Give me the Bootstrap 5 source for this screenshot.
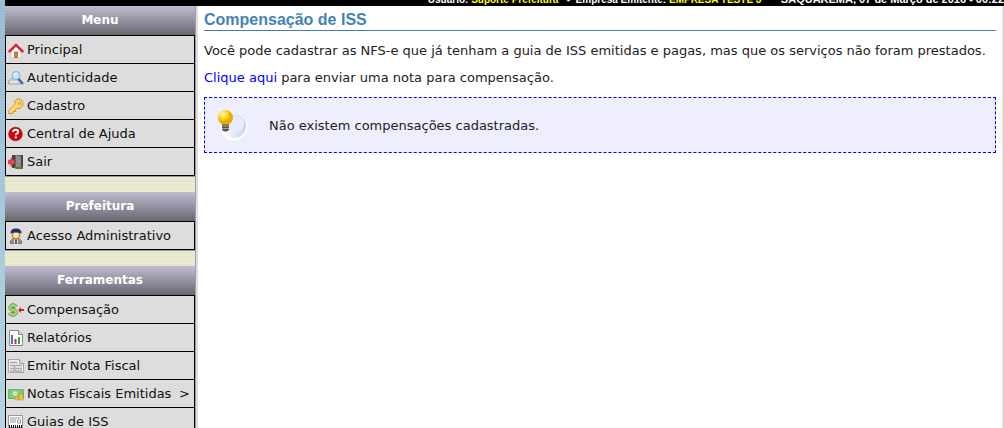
<!DOCTYPE html>
<html lang="pt-BR">
<head>
<meta charset="utf-8">
<meta name="viewport" content="width=device-width, initial-scale=1">
<title>Compensação de ISS</title>
<link rel="stylesheet" href="https://cdn.jsdelivr.net/npm/bootstrap@5.3.0/dist/css/bootstrap.min.css">
<script src="https://cdn.jsdelivr.net/npm/bootstrap@5.3.0/dist/js/bootstrap.bundle.min.js" defer></script>
<style>
  body { font: 13px/19px "DejaVu Sans", Verdana, sans-serif; color: #222; min-height: 100vh; background: #fff; overflow: hidden; }
  .edge { width: 5px; background: repeating-linear-gradient(rgba(255,255,255,.09) 0 1px, transparent 1px 3px), linear-gradient(#94bcd5, #b5d3e2); }
  .topbar { height: 6px; background: #000; color: #fff; font: bold 10px/12px "Liberation Sans", Arial, sans-serif; white-space: pre; }
  .topbar b { color: #ff0; }
  .topbar time { font-size: 11px; }
  .sidebar { width: 191px; background: repeating-linear-gradient(#ebebd3 0 2px, #e6e6c8 2px 4px); border-right: 1px solid #a09eaa; }
  .menu-title { height: 29px; font: bold 12px/29px "DejaVu Sans", Verdana, sans-serif; color: #fff; background: linear-gradient(#bfbdd0, #686770); }
  .menu-block { margin-bottom: 16px; box-shadow: 0 1px #99979f; }
  .menu-list { border: 1px solid #000; }
  .menu-list li + li { border-top: 1px solid #000; }
  .menu-list a { height: 27px; padding: 0 4px 0 2px; gap: 3px; background: #ddd; color: #111; text-decoration: none; }
  .menu-list a:hover { background: #eee; }
  .menu-list svg { width: 16px; height: 16px; flex: none; }
  .page-body { padding: 3px 7px 0 6px; border-left: 2px solid #dedee2; border-right: 1px solid #ccc; box-shadow: inset -2px 0 #f2f2f2; }
  .page-title { font: bold 16px/21px "Liberation Sans", Arial, sans-serif; color: #4682b4; border-bottom: 1px solid #4080c0; margin-bottom: 10px; }
  .page-body p { margin-bottom: 8px; }
  .page-body p a { color: #00f; text-decoration: none; }
  .notice { height: 56px; margin-top: 10px; padding-left: 12px; gap: 20px; border: 1px dashed #00f; background: #eef; }
</style>
</head>
<body class="d-flex">
<div class="edge flex-shrink-0"></div>
<div class="flex-grow-1 d-flex flex-column">
  <header class="topbar d-flex justify-content-end align-items-end overflow-hidden"><span>Usuário: <b>Suporte Prefeitura</b>   -  Empresa Emitente: <b>EMPRESA TESTE 3</b>       <time>SAQUAREMA, 07 de Março de 2016 - 00:22</time></span></header>
  <div class="d-flex flex-grow-1">
    <nav class="sidebar flex-shrink-0" aria-label="Menu">
      <section class="menu-block">
        <h2 class="menu-title text-center m-0">Menu</h2>
        <ul class="menu-list list-unstyled m-0">
          <li><a class="d-flex align-items-center" href="#"><svg viewBox="0 0 16 16"><path d="M3 9v6.500h10V9L8 4z" fill="#fff" stroke="#bbb" stroke-width=".7"/><path d="M11.500 2h2v4l-2-2z" fill="#fff" stroke="#ccc" stroke-width=".5"/><path d="M.8 10 8 3l7.200 7" fill="none" stroke="#e0203f" stroke-width="2.600"/><path d="M6 9.500h4V16H6z" fill="#c77836"/></svg>Principal</a></li>
          <li><a class="d-flex align-items-center" href="#"><svg viewBox="0 0 16 16"><path d="m.5 11 3-3h7l3 3v3h-13z" fill="#ccc" stroke="#999" stroke-width=".7"/><path d="M2 12h8" stroke="#fff"/><circle cx="8" cy="5.500" r="4" fill="#c5e6fb" stroke="#86a9cc"/><path d="m10.500 9 4.500 5" stroke="#3867b8" stroke-width="2.400"/><path d="M5.500 5q1-2 3-2" stroke="#fff" fill="none"/></svg>Autenticidade</a></li>
          <li><a class="d-flex align-items-center" href="#"><svg viewBox="0 0 16 16"><path fill-rule="evenodd" d="M7 2.500q2-2.500 6-1 3 3 1.500 6.500-2 3-5.500 2.500l-1.500 1v2H5v2H.8v-3L7 6.500zm4.300 1.300a1.300 1.300 0 1 0 1.500 2z" fill="#ffda60" stroke="#d0922a"/><path d="m2 13.500 6.500-6.500" stroke="#fff3ad"/></svg>Cadastro</a></li>
          <li><a class="d-flex align-items-center" href="#"><svg viewBox="0 0 16 16"><circle cx="7.500" cy="8" r="6.800" fill="#c9080d" stroke="#a50005" stroke-width=".6"/><path d="M5 6q.3-2.300 2.700-2.300 2.500 0 2.500 2 0 1.300-1.500 2-.9.500-.9 1.600" fill="none" stroke="#fff" stroke-width="1.900"/><path d="M6.800 10.500h2v1.800h-2z" fill="#fff"/></svg>Central de Ajuda</a></li>
          <li><a class="d-flex align-items-center" href="#"><svg viewBox="0 0 16 16"><path d="M4 1h11v13H4z" fill="#444"/><path d="m7.500 1 5.500 1v13l-5.500-2z" fill="#8c8c8c"/><path d="M5 13h10v2H8z" fill="#687425"/><path d="M.5 6H3V3.500L7.500 8 3 12.500V10H.5z" fill="#e84848" stroke="#b52020" stroke-width=".5"/></svg>Sair</a></li>
        </ul>
      </section>
      <section class="menu-block">
        <h2 class="menu-title text-center m-0">Prefeitura</h2>
        <ul class="menu-list list-unstyled m-0">
          <li><a class="d-flex align-items-center" href="#"><svg viewBox="0 0 16 16"><path d="M2.500 15.500V13l2-2h7l2 2v2.500z" fill="#8b8e95" stroke="#555" stroke-width=".7"/><path d="m6 10.500 2 2 2-2v5H6z" fill="#e5e5e5"/><path d="M7.300 12h1.400v3.500H7.300z" fill="#222"/><circle cx="8" cy="7" r="3.800" fill="#ffe0a0" stroke="#b96a17"/><path d="M2.500 5.500q0-5 5.500-5t5.500 5q-5.500-2-11 0z" fill="#173263"/></svg>Acesso Administrativo</a></li>
        </ul>
      </section>
      <section class="menu-block mb-0">
        <h2 class="menu-title text-center m-0">Ferramentas</h2>
        <ul class="menu-list list-unstyled m-0">
          <li><a class="d-flex align-items-center" href="#"><svg viewBox="0 0 16 16"><path d="M5 1v14M8.500 5Q7.500 3.500 5 3.500T2 5.700Q2 7.500 5 8t3.200 2.600Q8 12.500 5 12.500T1.300 11" fill="none" stroke="#6d9c50" stroke-width="3.400"/><path d="M5 1.500v2M5 12.500v2M8.500 5Q7.500 3.500 5 3.500T2 5.700Q2 7.500 5 8t3.200 2.600Q8 12.500 5 12.500T1.300 11" fill="none" stroke="#a6d67d" stroke-width="2"/><path d="m10 8 3-3v2h3v2h-3v2z" fill="#c52a2a"/></svg>Compensação</a></li>
          <li><a class="d-flex align-items-center" href="#"><svg viewBox="0 0 16 16"><path d="M1.500.5h9l4 4v11h-13z" fill="#fff" stroke="#888"/><path d="M10.500.5v4h4" fill="#ddd" stroke="#888"/><path d="M3 5h2v9H3z" fill="#367bc9"/><path d="M6.500 9h2v5h-2z" fill="#ce2939"/><path d="M10 7h2v7h-2z" fill="#35a33b"/></svg>Relatórios</a></li>
          <li><a class="d-flex align-items-center" href="#"><svg viewBox="0 0 16 16"><path d="M.5 1.500h11l4 4v9H.5z" fill="#eeeef1" stroke="#a4a5ac"/><path d="M11.500 1.500v4h4" fill="#ddd" stroke="#a4a5ac"/><path d="M2 4.500h7M2 7.500h12M2 10.500h12M6.500 7v6M2 13h12" stroke="#a9aab1" stroke-width="1.400" fill="none"/></svg>Emitir Nota Fiscal</a></li>
          <li><a class="d-flex align-items-center" href="#"><svg viewBox="0 0 16 16"><path d="M.5 3.500h15v9H.5z" fill="#80c780" stroke="#6bb56b"/><circle cx="7" cy="7.500" r="2.500" fill="#c5e8b5"/><path d="M7 11h4v3H7zM11 8h4v6h-4z" fill="#eec348" stroke="#c89525" stroke-width=".6"/></svg>Notas Fiscais Emitidas<span class="ms-auto">&gt;</span></a></li>
          <li><a class="d-flex align-items-center" href="#"><svg viewBox="0 0 16 16"><path d="M.5 1.500h14v12H.5z" fill="#fff" stroke="#999"/><path d="M2 4h11M2 6h6M2 8h6M9.500 6h3v3h-3z" stroke="#999" fill="none"/><path d="M1 13.500h14" stroke="#111" stroke-width="5" stroke-dasharray="1 1"/></svg>Guias de ISS</a></li>
        </ul>
      </section>
    </nav>
    <main class="page-body flex-grow-1">
      <h1 class="page-title">Compensação de ISS</h1>
      <p>Você pode cadastrar as NFS-e que já tenham a guia de ISS emitidas e pagas, mas que os serviços não foram prestados.</p>
      <p><a href="#">Clique aqui</a> para enviar uma nota para compensação.</p>
      <div class="notice d-flex align-items-center" role="status">
        <svg width="32" height="32" viewBox="0 0 32 32" aria-hidden="true"><defs><linearGradient id="disc"><stop stop-color="#fff"/><stop offset="1" stop-color="#c5d2ef"/></linearGradient><radialGradient id="bulb" cx=".35" cy=".3"><stop stop-color="#fffbd0"/><stop offset=".5" stop-color="#ffdf24"/><stop offset="1" stop-color="#e8ac00"/></radialGradient></defs><circle cx="17" cy="18" r="13.500" fill="#fff"/><circle cx="17" cy="17" r="12" fill="url(#disc)"/><circle cx="19" cy="15" r="8" fill="#e6ecfa"/><path d="M5 14h7v7q-3.500 3-7 0z" fill="#575346"/><path d="M5 17h7M5 19.500h7" stroke="#aaa48e"/><path d="M8.500 1A7.500 7.500 0 0 0 1 8.500q0 4 4 7h7q4-3 4-7A7.500 7.500 0 0 0 8.500 1z" fill="url(#bulb)"/></svg>
        <span>Não existem compensações cadastradas.</span>
      </div>
    </main>
  </div>
</div>
</body>
</html>
